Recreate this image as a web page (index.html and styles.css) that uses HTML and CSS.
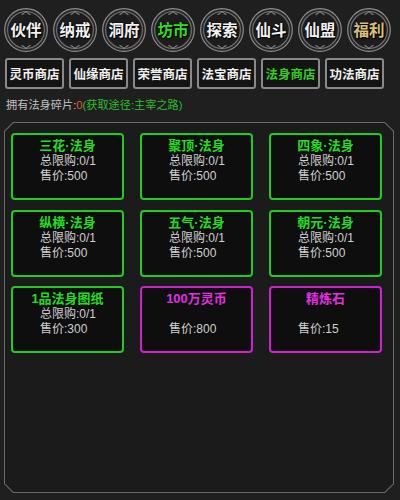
FILE: index.html
```html
<!DOCTYPE html>
<html>
<head>
<meta charset="utf-8">
<link rel="stylesheet" href="styles.css">
</head>
<body>
<div class="page">
  <nav class="circles">
    <div class="circ"><svg class="ring" viewBox="0 0 44 44"><circle cx="22" cy="22" r="21.3" fill="#262626" stroke="#8c8c8c" stroke-width="1.2"/><circle cx="22" cy="22" r="18.4" fill="#1d1d1d" stroke="#6e6e6e" stroke-width="1.2"/><path d="M17.5 6.4 Q20 6.4 22 3.4 Q24 6.4 26.5 6.4" fill="none" stroke="#a0a0a0" stroke-width="1"/><path d="M17.5 37.6 Q20 37.6 22 40.6 Q24 37.6 26.5 37.6" fill="none" stroke="#a0a0a0" stroke-width="1"/></svg><span>伙伴</span></div>
    <div class="circ"><svg class="ring" viewBox="0 0 44 44"><circle cx="22" cy="22" r="21.3" fill="#262626" stroke="#8c8c8c" stroke-width="1.2"/><circle cx="22" cy="22" r="18.4" fill="#1d1d1d" stroke="#6e6e6e" stroke-width="1.2"/><path d="M17.5 6.4 Q20 6.4 22 3.4 Q24 6.4 26.5 6.4" fill="none" stroke="#a0a0a0" stroke-width="1"/><path d="M17.5 37.6 Q20 37.6 22 40.6 Q24 37.6 26.5 37.6" fill="none" stroke="#a0a0a0" stroke-width="1"/></svg><span>纳戒</span></div>
    <div class="circ"><svg class="ring" viewBox="0 0 44 44"><circle cx="22" cy="22" r="21.3" fill="#262626" stroke="#8c8c8c" stroke-width="1.2"/><circle cx="22" cy="22" r="18.4" fill="#1d1d1d" stroke="#6e6e6e" stroke-width="1.2"/><path d="M17.5 6.4 Q20 6.4 22 3.4 Q24 6.4 26.5 6.4" fill="none" stroke="#a0a0a0" stroke-width="1"/><path d="M17.5 37.6 Q20 37.6 22 40.6 Q24 37.6 26.5 37.6" fill="none" stroke="#a0a0a0" stroke-width="1"/></svg><span>洞府</span></div>
    <div class="circ green"><svg class="ring" viewBox="0 0 44 44"><circle cx="22" cy="22" r="21.3" fill="#262626" stroke="#8c8c8c" stroke-width="1.2"/><circle cx="22" cy="22" r="18.4" fill="#1d1d1d" stroke="#6e6e6e" stroke-width="1.2"/><path d="M17.5 6.4 Q20 6.4 22 3.4 Q24 6.4 26.5 6.4" fill="none" stroke="#a0a0a0" stroke-width="1"/><path d="M17.5 37.6 Q20 37.6 22 40.6 Q24 37.6 26.5 37.6" fill="none" stroke="#a0a0a0" stroke-width="1"/></svg><span>坊市</span></div>
    <div class="circ"><svg class="ring" viewBox="0 0 44 44"><circle cx="22" cy="22" r="21.3" fill="#262626" stroke="#8c8c8c" stroke-width="1.2"/><circle cx="22" cy="22" r="18.4" fill="#1d1d1d" stroke="#6e6e6e" stroke-width="1.2"/><path d="M17.5 6.4 Q20 6.4 22 3.4 Q24 6.4 26.5 6.4" fill="none" stroke="#a0a0a0" stroke-width="1"/><path d="M17.5 37.6 Q20 37.6 22 40.6 Q24 37.6 26.5 37.6" fill="none" stroke="#a0a0a0" stroke-width="1"/></svg><span>探索</span></div>
    <div class="circ"><svg class="ring" viewBox="0 0 44 44"><circle cx="22" cy="22" r="21.3" fill="#262626" stroke="#8c8c8c" stroke-width="1.2"/><circle cx="22" cy="22" r="18.4" fill="#1d1d1d" stroke="#6e6e6e" stroke-width="1.2"/><path d="M17.5 6.4 Q20 6.4 22 3.4 Q24 6.4 26.5 6.4" fill="none" stroke="#a0a0a0" stroke-width="1"/><path d="M17.5 37.6 Q20 37.6 22 40.6 Q24 37.6 26.5 37.6" fill="none" stroke="#a0a0a0" stroke-width="1"/></svg><span>仙斗</span></div>
    <div class="circ"><svg class="ring" viewBox="0 0 44 44"><circle cx="22" cy="22" r="21.3" fill="#262626" stroke="#8c8c8c" stroke-width="1.2"/><circle cx="22" cy="22" r="18.4" fill="#1d1d1d" stroke="#6e6e6e" stroke-width="1.2"/><path d="M17.5 6.4 Q20 6.4 22 3.4 Q24 6.4 26.5 6.4" fill="none" stroke="#a0a0a0" stroke-width="1"/><path d="M17.5 37.6 Q20 37.6 22 40.6 Q24 37.6 26.5 37.6" fill="none" stroke="#a0a0a0" stroke-width="1"/></svg><span>仙盟</span></div>
    <div class="circ gold"><svg class="ring" viewBox="0 0 44 44"><circle cx="22" cy="22" r="21.3" fill="#262626" stroke="#8c8c8c" stroke-width="1.2"/><circle cx="22" cy="22" r="18.4" fill="#1d1d1d" stroke="#6e6e6e" stroke-width="1.2"/><path d="M17.5 6.4 Q20 6.4 22 3.4 Q24 6.4 26.5 6.4" fill="none" stroke="#a0a0a0" stroke-width="1"/><path d="M17.5 37.6 Q20 37.6 22 40.6 Q24 37.6 26.5 37.6" fill="none" stroke="#a0a0a0" stroke-width="1"/></svg><span>福利</span></div>
  </nav>

  <div class="tabs">
    <div class="tab">灵币商店</div>
    <div class="tab">仙缘商店</div>
    <div class="tab">荣誉商店</div>
    <div class="tab">法宝商店</div>
    <div class="tab active">法身商店</div>
    <div class="tab">功法商店</div>
  </div>

  <div class="info">拥有法身碎片:<span class="zero">0</span><span class="route">(获取途径:主宰之路)</span></div>

  <div class="panel">
    <div class="panel-inner">
      <div class="grid">
        <div class="card"><div class="title">三花·法身</div><div class="line">总限购:0/1</div><div class="line">售价:500</div></div>
        <div class="card"><div class="title">聚顶·法身</div><div class="line">总限购:0/1</div><div class="line">售价:500</div></div>
        <div class="card"><div class="title">四象·法身</div><div class="line">总限购:0/1</div><div class="line">售价:500</div></div>
        <div class="card"><div class="title">纵横·法身</div><div class="line">总限购:0/1</div><div class="line">售价:500</div></div>
        <div class="card"><div class="title">五气·法身</div><div class="line">总限购:0/1</div><div class="line">售价:500</div></div>
        <div class="card"><div class="title">朝元·法身</div><div class="line">总限购:0/1</div><div class="line">售价:500</div></div>
        <div class="card"><div class="title">1品法身图纸</div><div class="line">总限购:0/1</div><div class="line">售价:300</div></div>
        <div class="card pink"><div class="title">100万灵币</div><div class="line">&nbsp;</div><div class="line">售价:800</div></div>
        <div class="card pink"><div class="title">精炼石</div><div class="line">&nbsp;</div><div class="line">售价:15</div></div>
      </div>
    </div>
  </div>
</div>
</body>
</html>
```

FILE: styles.css
```css
html, body {
  margin: 0;
  padding: 0;
  background: #1f1f1f;
}
body {
  font-family: "Liberation Sans", "Noto Sans CJK SC", sans-serif;
  color: #d0d0d0;
  width: 400px;
  height: 500px;
  overflow: hidden;
}
.page {
  padding: 8px 0 0 4px;
}
.circles {
  display: flex;
  gap: 5px;
}
.circ {
  width: 44px;
  height: 44px;
  display: grid;
  place-items: center;
}
.circ > * {
  grid-area: 1 / 1;
}
.ring {
  width: 44px;
  height: 44px;
  display: block;
}
.circ span {
  font-family: "Noto Sans CJK SC", sans-serif;
  font-weight: 700;
  font-size: 15.5px;
  line-height: 1;
  color: #f2f2f2;
  text-shadow: 0 0 2px #000, 1px 1px 1px #000;
}
.circ.green span { color: #33dd22; }
.circ.gold span { color: #d9c07a; }

.tabs {
  display: flex;
  gap: 5px;
  margin: 6px 0 0 1px;
}
.tab {
  width: 59px;
  height: 31px;
  box-sizing: border-box;
  border: 2px solid #8a8a8a;
  border-radius: 3px;
  background: #141414;
  color: #f0f0f0;
  font-family: "Noto Sans CJK SC", sans-serif;
  font-weight: 700;
  font-size: 12.5px;
  display: flex;
  align-items: center;
  justify-content: center;
}
.tab.active { color: #33cc22; }

.info {
  margin: 9px 0 0 2px;
  font-size: 11.2px;
  line-height: 14px;
  color: #c0c0c0;
}
.info .zero { color: #e05a2a; }
.info .route { color: #2ebd2e; }

.panel {
  margin-top: 10px;
  width: 390px;
  height: 371px;
  box-sizing: border-box;
  padding: 1px;
  background: #6a6a6a;
  clip-path: polygon(9px 0, calc(100% - 9px) 0, 100% 9px, 100% calc(100% - 9px), calc(100% - 9px) 100%, 9px 100%, 0 calc(100% - 9px), 0 9px);
}
.panel-inner {
  width: 100%;
  height: 100%;
  background: #1b1b1b;
  clip-path: polygon(8.5px 0, calc(100% - 8.5px) 0, 100% 8.5px, 100% calc(100% - 8.5px), calc(100% - 8.5px) 100%, 8.5px 100%, 0 calc(100% - 8.5px), 0 8.5px);
  padding: 10px 0 0 6px;
  box-sizing: border-box;
}
.grid {
  display: grid;
  grid-template-columns: repeat(3, 113px);
  grid-auto-rows: 67px;
  column-gap: 16px;
  row-gap: 9.5px;
}
.card {
  box-sizing: border-box;
  border: 2px solid #1fcc1f;
  border-radius: 4px;
  background: #0e0e0e;
  padding: 2px 0 0 27px;
}
.card.pink { border-color: #d21fd2; }
.title {
  margin-left: -27px;
  height: 17px;
  text-align: center;
  font-family: "Liberation Sans", "Noto Sans CJK SC", sans-serif;
  font-weight: 700;
  font-size: 13px;
  line-height: 17px;
  color: #22dd22;
  overflow: hidden;
}
.card.pink .title {
  color: #e030e0;
}
.line {
  height: 15px;
  font-size: 12px;
  line-height: 15px;
  color: #d0d0d0;
  overflow: hidden;
}
```
